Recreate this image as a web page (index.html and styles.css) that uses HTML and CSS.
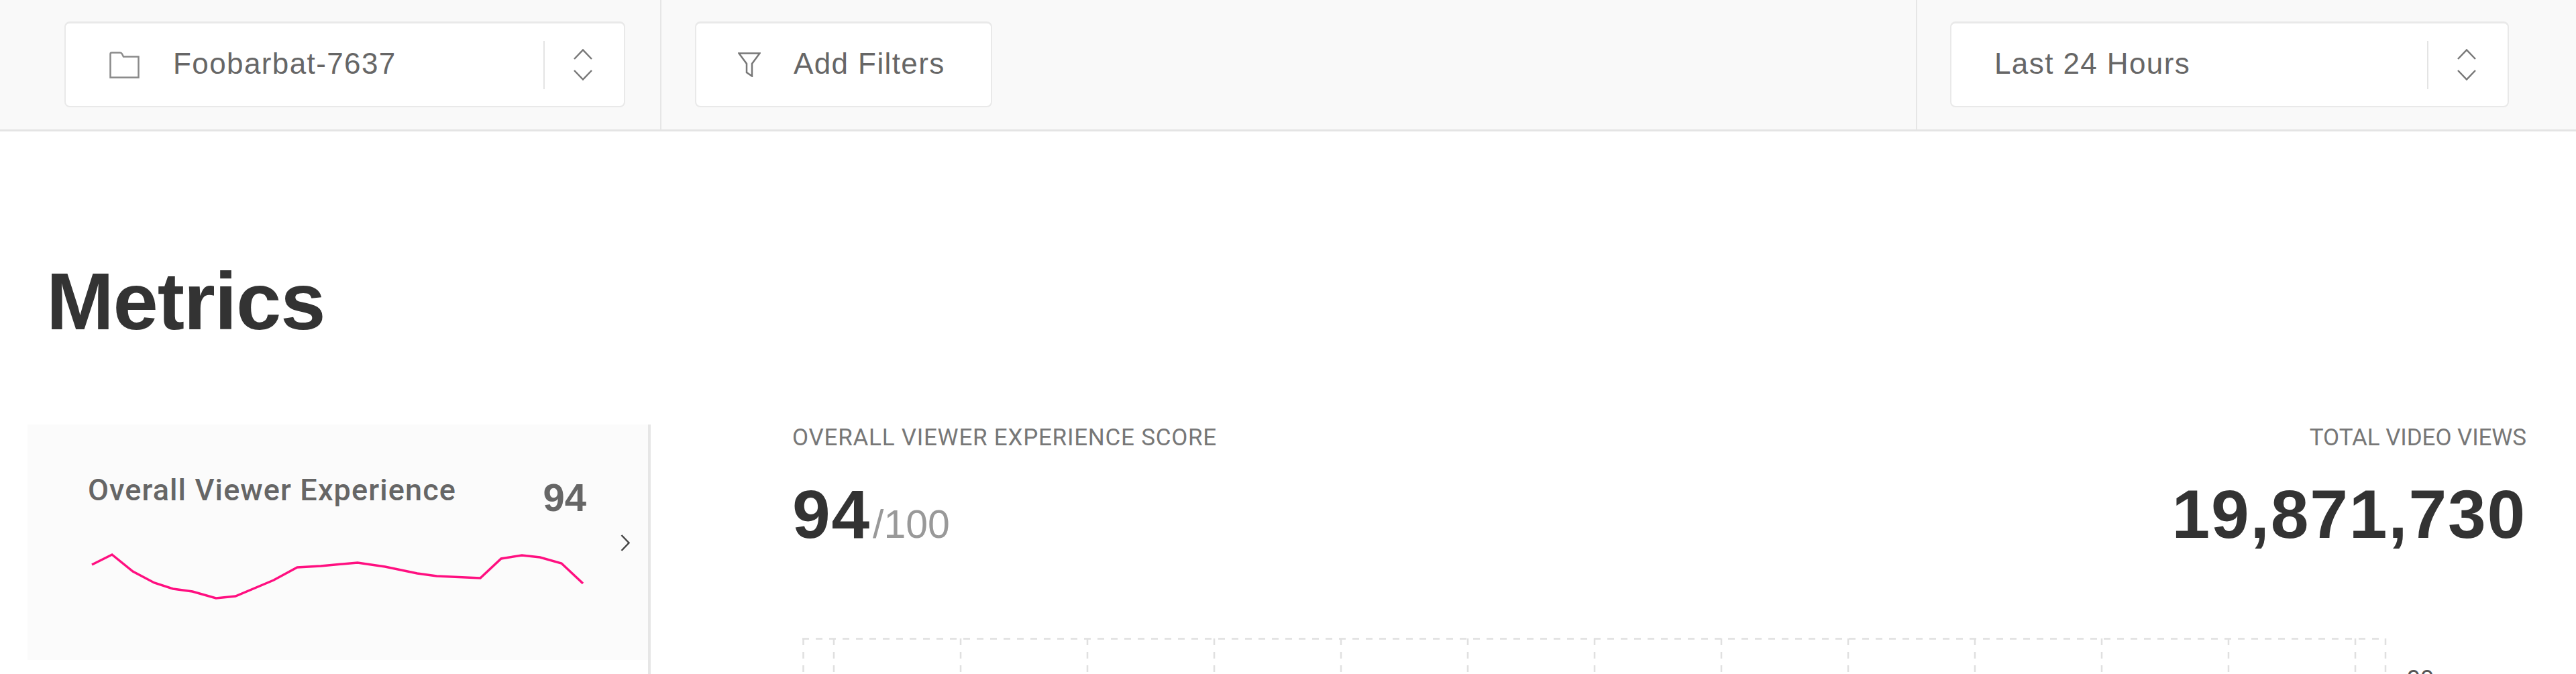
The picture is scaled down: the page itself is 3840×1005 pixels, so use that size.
FILE: index.html
```html
<!DOCTYPE html>
<html lang="en">
<head>
<meta charset="utf-8">
<title>Metrics</title>
<link rel="stylesheet" href="styles.css">
</head>
<body>
<header class="toolbar">
  <div class="tool-section tool-env">
    <div class="select select-env">
      <svg class="folder" viewBox="0 0 45 40" fill="none" stroke="#8a8a8a" stroke-width="2.5"><path d="M1.5 38.5V3.5Q1.5 1.5 3.5 1.5H16Q18 1.5 19 3.5L21 7.5H43.5V38.5Z"/></svg>
      <span class="select-text">Foobarbat-7637</span>
      <span class="select-end">
        <svg class="updown" viewBox="0 0 28 47" fill="none" stroke="#777" stroke-width="2.5"><path d="M1 15L14 1.5L27 15M1 32L14 45.5L27 32"/></svg>
      </span>
    </div>
  </div>
  <div class="tool-section tool-filters">
    <div class="select select-filter">
      <svg class="funnel" viewBox="0 0 34 37" fill="none" stroke="#777" stroke-width="2.5"><path d="M1.5 1.5H32.5L21 17V35.5L13 30V17Z"/></svg>
      <span class="select-text">Add Filters</span>
    </div>
  </div>
  <div class="tool-section tool-time">
    <div class="select select-time">
      <span class="select-text">Last 24 Hours</span>
      <span class="select-end">
        <svg class="updown" viewBox="0 0 28 47" fill="none" stroke="#777" stroke-width="2.5"><path d="M1 15L14 1.5L27 15M1 32L14 45.5L27 32"/></svg>
      </span>
    </div>
  </div>
</header>
<main class="page">
  <h1 class="title">Metrics</h1>
  <div class="content">
    <aside class="sidebar">
      <div class="card">
        <div class="card-body">
          <div class="card-head">
            <span class="card-title">Overall Viewer Experience</span>
            <span class="card-score">94</span>
          </div>
          <svg class="spark" viewBox="0 0 740 70" fill="none" stroke="#ff0f80" stroke-width="3.5"><polyline points="0,22 30,7 61,32 93,49 121,58 150,62 185,72 214,69 271,45 306,26 341,24 396,19 437,25 485,35 514,39 579,42 610,13 641,8 668,11 700,20 732,50"/></svg>
        </div>
        <svg class="card-arrow" viewBox="0 0 14 25" fill="none" stroke="#444" stroke-width="2.5"><path d="M1.5 1L12.5 12.5L1.5 24"/></svg>
      </div>
    </aside>
    <section class="detail">
      <div class="stats">
        <div class="stat">
          <div class="stat-label">OVERALL VIEWER EXPERIENCE SCORE</div>
          <div class="stat-value">94<span class="stat-of">/100</span></div>
        </div>
        <div class="stat stat-right">
          <div class="stat-label">TOTAL VIDEO VIEWS</div>
          <div class="stat-value">19,871,730</div>
        </div>
      </div>
      <div class="chart">
        <svg class="grid" viewBox="0 0 2362 60" fill="none" stroke="#e0e0e0" stroke-width="2.5" stroke-dasharray="10 10">
          <path d="M0 1.5H2360"/>
          <path d="M1.5 1V60M47 1V60M236 1V60M425 1V60M614 1V60M803 1V60M992 1V60M1181 1V60M1370 1V60M1559 1V60M1748 1V60M1937 1V60M2126 1V60M2315 1V60M2360 1V60"/>
        </svg>
        <span class="axis-label">90</span>
      </div>
    </section>
  </div>
</main>
</body>
</html>
```
FILE: styles.css
```css
* { box-sizing: border-box; }
html, body { margin: 0; height: 1005px; overflow: hidden; background: #fff; }
body { font-family: "Liberation Sans", Arial, sans-serif; color: #333; }

.toolbar { display: flex; height: 196px; background: #f9f9f9; border-bottom: 3px solid #e4e4e4; }
.tool-section { display: flex; padding-top: 32px; }
.tool-env { width: 986px; padding-left: 96px; border-right: 2px solid #e6e6e6; }
.tool-filters { width: 1870px; padding-left: 50px; }
.tool-time { flex: 1; padding-left: 49px; border-left: 2px solid #e6e6e6; }

.select { display: flex; align-items: center; height: 128px; background: #fff; border: 2px solid #e9e9e9; border-top-width: 3px; border-radius: 8px; }
.select-env { width: 836px; padding-left: 65px; }
.select-filter { width: 443px; padding-left: 62px; }
.select-time { width: 833px; padding-left: 64px; }
.select-text { font-size: 44px; letter-spacing: 1.4px; color: #666; position: relative; top: -2px; }
.folder { width: 45px; height: 40px; margin-right: 50px; }
.funnel { width: 34px; height: 37px; margin-right: 49px; }
.select-end { display: flex; align-items: center; justify-content: center; width: 120px; height: 72px; margin-left: auto; padding-right: 5px; border-left: 2px solid #e4e4e4; }
.updown { width: 28px; height: 47px; }

.title { margin: 0; padding: 193px 0 0 69px; font-size: 121px; line-height: 120px; font-weight: 700; letter-spacing: -1.2px; color: #333; }

.content { display: flex; margin-top: 124px; }
.sidebar { width: 970px; height: 372px; padding-left: 41px; border-right: 4px solid #e6e6e6; }
.card { display: flex; height: 351px; background: #fbfbfb; padding: 73px 0 0 90px; }
.card-body { width: 743px; }
.card-head { display: flex; justify-content: space-between; align-items: flex-start; }
.card-title { font-family: Roboto, "Liberation Sans", sans-serif; font-size: 45px; line-height: 50px; font-weight: 500; letter-spacing: 1.1px; color: #666; }
.card-score { font-size: 58px; line-height: 50px; font-weight: 700; color: #666; margin-top: 11px; }
.spark { display: block; width: 740px; height: 70px; margin: 53px 0 0 6px; overflow: visible; }
.card-arrow { width: 14px; height: 25px; margin: 91px 0 0 51px; flex: none; }

.detail { flex: 1; padding: 0 74px 0 211px; }
.stats { display: flex; justify-content: space-between; }
.stat-right { text-align: right; }
.stat-label { font-family: Roboto, "Liberation Sans", sans-serif; font-size: 35px; line-height: 40px; letter-spacing: 0.75px; color: #777; }
.stat-right .stat-label { letter-spacing: -0.1px; }
.stat-value { font-size: 102px; line-height: 110px; font-weight: 700; color: #333; letter-spacing: 1.8px; margin-top: 39px; }
.stat-of { font-size: 59px; font-weight: 400; color: #999; letter-spacing: 0; margin-left: 3px; }
.chart { display: flex; margin: 114px 0 0 15px; }
.grid { display: block; width: 2362px; height: 60px; flex: none; }
.axis-label { font-size: 36px; line-height: 40px; color: #555; margin: 42px 0 0 30px; }
```
